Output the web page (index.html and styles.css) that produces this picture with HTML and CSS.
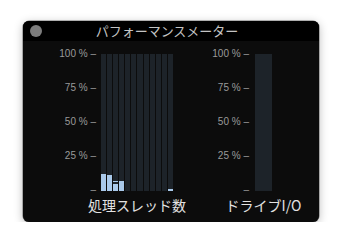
FILE: index.html
```html
<!DOCTYPE html>
<html lang="ja">
<head>
<meta charset="utf-8">
<link rel="stylesheet" href="styles.css">
</head>
<body>
<div class="window">
  <div class="titlebar">
    <span class="dot"></span>
    <span class="title">パフォーマンスメーター</span>
    <span></span>
  </div>
  <div class="content">
    <div class="chart">
      <div class="axis">
        <span>100 % –</span><span>75 % –</span><span>50 % –</span><span>25 % –</span><span>–</span>
      </div>
      <div class="plot plot-threads">
        <div class="bars">
          <div class="bar"><div class="fill" style="height:12.4%"></div></div>
          <div class="bar"><div class="fill" style="height:11.7%"></div></div>
          <div class="bar"><div class="fill" style="height:5.3%"></div><div class="peak" style="bottom:6.6%"></div></div>
          <div class="bar"><div class="fill" style="height:7.3%"></div></div>
          <div class="bar"></div>
          <div class="bar"></div>
          <div class="bar"></div>
          <div class="bar"></div>
          <div class="bar"></div>
          <div class="bar"></div>
          <div class="bar"></div>
          <div class="bar"><div class="fill" style="height:1.5%"></div></div>
        </div>
        <div class="label">処理スレッド数</div>
      </div>
    </div>
    <div class="chart">
      <div class="axis">
        <span>100 % –</span><span>75 % –</span><span>50 % –</span><span>25 % –</span><span>–</span>
      </div>
      <div class="plot plot-drive">
        <div class="bars">
          <div class="bar"></div>
        </div>
        <div class="label">ドライブI/O</div>
      </div>
    </div>
  </div>
</div>
</body>
</html>
```
FILE: styles.css
```css
html, body {
  margin: 0;
  padding: 0;
  background: #ffffff;
}
body {
  padding: 21px 0 0 23px;
  font-family: "Liberation Sans", "Noto Sans CJK JP", sans-serif;
}
.window {
  width: 296px;
  height: 201px;
  border-radius: 6px;
  background: #0c0c0c;
  box-shadow: 0 2px 10px rgba(0, 0, 0, 0.28), 0 0 0 0.5px rgba(0, 0, 0, 0.5);
  overflow: hidden;
}
.titlebar {
  height: 20px;
  background: #000000;
  display: grid;
  grid-template-columns: 1fr auto 1fr;
  align-items: center;
  padding: 0 7px;
}
.dot {
  width: 12px;
  height: 12px;
  border-radius: 50%;
  background: #7d7d7d;
}
.title {
  font-family: "Noto Sans CJK JP", sans-serif;
  font-size: 13px;
  line-height: 20px;
  color: #c4c4c4;
  margin-left: -8px;
}
.content {
  display: flex;
  padding: 7px 0 0 35px;
  gap: 38px;
}
.chart {
  display: flex;
  align-items: flex-start;
}
.axis {
  width: 38px;
  height: 148px;
  display: flex;
  flex-direction: column;
  justify-content: space-between;
  align-items: flex-end;
  font-size: 10px;
  line-height: 12px;
  color: #9a9a9a;
  white-space: nowrap;
}
.plot {
  margin-left: 5px;
  margin-top: 6px;
  display: flex;
  flex-direction: column;
}
.plot-threads {
  width: 72px;
}
.plot-drive {
  width: 17px;
  margin-left: 6px;
}
.bars {
  height: 137px;
  display: flex;
  gap: 1px;
}
.bar {
  flex: 1;
  position: relative;
  background: #1d2329;
}
.fill {
  position: absolute;
  left: 0;
  right: 0;
  bottom: 0;
  background: #a9c9ea;
}
.peak {
  position: absolute;
  left: 0;
  right: 0;
  height: 1px;
  background: #a9c9ea;
}
.label {
  display: flex;
  justify-content: center;
  white-space: nowrap;
  margin-top: 6px;
  font-family: "Noto Sans CJK JP", sans-serif;
  font-size: 14px;
  line-height: 16px;
  color: #e2e2e2;
}
```
